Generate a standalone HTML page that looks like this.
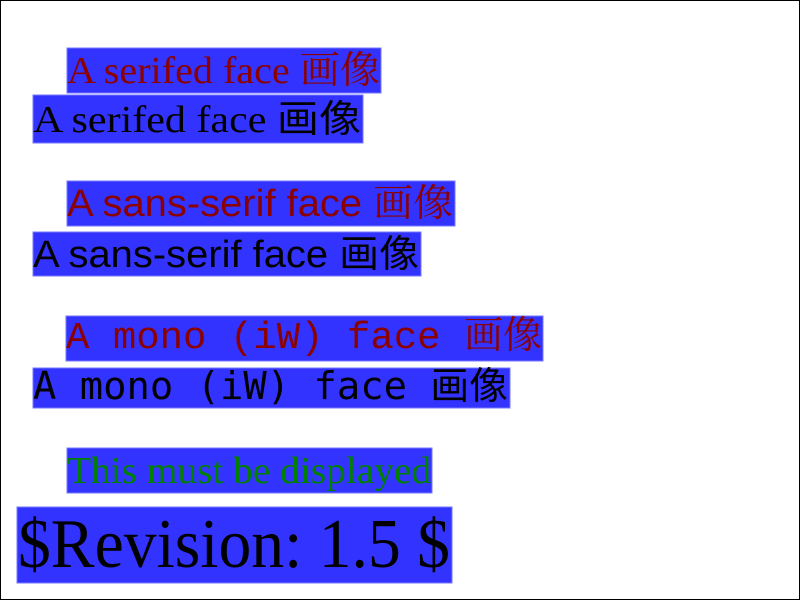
<!DOCTYPE html>
<html><head><meta charset="utf-8"><style>
html,body{margin:0;padding:0;background:#fff;}
svg{display:block}
</style></head><body>
<svg width="800" height="600" xmlns="http://www.w3.org/2000/svg">
<rect x="0.5" y="0.5" width="799" height="599" fill="#fff" stroke="#000"/>
<g fill="#3333ff" stroke="#7777ff" stroke-width="1">
<rect x="67" y="48" width="314" height="45"/>
<rect x="33" y="95" width="330" height="48"/>
<rect x="67" y="181" width="388" height="45"/>
<rect x="33" y="232" width="388" height="44"/>
<rect x="66" y="316" width="477" height="45"/>
<rect x="33" y="368" width="477" height="40"/>
<rect x="67" y="448" width="365" height="45"/>
<rect x="17" y="507" width="435" height="76"/>
</g>
<g font-size="38">
<text x="67" y="83" fill="#8b0000" font-family="Liberation Serif, Noto Serif CJK SC, serif" textLength="313" lengthAdjust="spacingAndGlyphs">A serifed face 画像</text>
<text x="33" y="132" fill="#000" font-family="Liberation Serif, Noto Sans CJK SC, serif" textLength="328" lengthAdjust="spacingAndGlyphs">A serifed face 画像</text>
<text x="67" y="216" fill="#8b0000" font-family="Liberation Sans, Noto Serif CJK SC, sans-serif" textLength="386" lengthAdjust="spacingAndGlyphs">A sans-serif face 画像</text>
<text x="33" y="267" fill="#000" font-family="Liberation Sans, Noto Sans CJK SC, sans-serif" textLength="386" lengthAdjust="spacingAndGlyphs">A sans-serif face 画像</text>
<text x="66" y="348" fill="#8b0000" font-family="Liberation Mono, Noto Serif CJK SC, monospace" textLength="476" lengthAdjust="spacingAndGlyphs">A mono (iW) face 画像</text>
<text x="33" y="399" fill="#000" font-family="DejaVu Sans Mono, Noto Sans CJK SC, monospace" textLength="475" lengthAdjust="spacingAndGlyphs">A mono (iW) face 画像</text>
<text x="67" y="483" fill="#008000" font-family="Liberation Serif, serif" textLength="364" lengthAdjust="spacingAndGlyphs">This must be displayed</text>
</g>
<text x="18" y="567" font-size="70" fill="#000" font-family="Liberation Serif, serif" textLength="432" lengthAdjust="spacingAndGlyphs">$Revision: 1.5 $</text>
</svg>
</body></html>
